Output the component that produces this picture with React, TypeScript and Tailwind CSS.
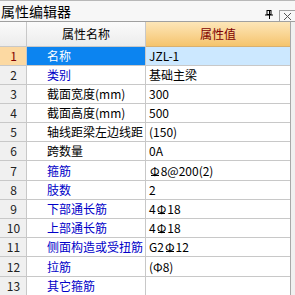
import React from 'react'

type Part = string | { bar: string }

interface Row {
    no: number
    name: string
    blue: boolean
    value: Part[]
}

// 三级钢符号：Φ 下加一横
function Steel() {
    return (
        <span className="relative inline-block leading-none mx-[1px]">
            Φ
            <span className="absolute left-[1px] right-[1px] bottom-[1px] h-px bg-black" />
        </span>
    )
}

const rows: Row[] = [
    { no: 1, name: '名称', blue: true, value: ['JZL-1'] },
    { no: 2, name: '类别', blue: true, value: ['基础主梁'] },
    { no: 3, name: '截面宽度(mm)', blue: false, value: ['300'] },
    { no: 4, name: '截面高度(mm)', blue: false, value: ['500'] },
    { no: 5, name: '轴线距梁左边线距', blue: false, value: ['(150)'] },
    { no: 6, name: '跨数量', blue: false, value: ['0A'] },
    { no: 7, name: '箍筋', blue: true, value: [{ bar: '' }, '8@200(2)'] },
    { no: 8, name: '肢数', blue: true, value: ['2'] },
    { no: 9, name: '下部通长筋', blue: true, value: ['4', { bar: '' }, '18'] },
    { no: 10, name: '上部通长筋', blue: true, value: ['4', { bar: '' }, '18'] },
    { no: 11, name: '侧面构造或受扭筋', blue: true, value: ['G2', { bar: '' }, '12'] },
    { no: 12, name: '拉筋', blue: true, value: ['(Φ8)'] },
    { no: 13, name: '其它箍筋', blue: true, value: [] },
]

export default function App() {
    return (
        <div
            className="w-[295px] h-[295px] overflow-hidden bg-[#f0f0f0] text-[12px] text-black"
            style={{ fontFamily: '"Noto Sans CJK SC", "Liberation Sans", sans-serif' }}
        >
            {/* 标题栏 */}
            <div className="h-[22px] border-t border-[#b8b8b8] border-b border-b-[#a0a0a0] bg-[#f7f7f7] flex items-end">
                <span className="text-[14px] leading-[19px] pl-[1px]">属性编辑器</span>
                <div className="ml-auto flex items-end">
                    <svg width="9" height="9" viewBox="0 0 9 9" className="mb-[2px] mr-[5px]">
                        <rect x="2" y="0.5" width="4" height="4" fill="none" stroke="#000" />
                        <rect x="4" y="0.5" width="1" height="4" fill="#000" />
                        <line x1="0" y1="5" x2="8" y2="5" stroke="#000" />
                        <line x1="4.5" y1="5" x2="4.5" y2="9" stroke="#000" />
                    </svg>
                    <div className="w-[16px] h-[11px] border-l border-t border-[#a0a0a0] flex items-center justify-center">
                        <svg width="9" height="9" viewBox="0 0 9 9">
                            <path d="M1 1 L8 8 M8 1 L1 8" stroke="#555" strokeWidth="1" />
                        </svg>
                    </div>
                </div>
            </div>

            {/* 表格 */}
            <div className="flex">
                <div className="w-[291px] bg-white border-r border-[#a8a8a8]">
                    <div className="grid grid-cols-[27px_119px_144px] h-[25px]">
                        <div className="bg-gradient-to-b from-[#fbfbfb] to-[#ececec] border-r border-b border-[#c8c8c8]" />
                        <div className="bg-gradient-to-b from-[#fbfbfb] to-[#ececec] border-r border-b border-[#c8c8c8] flex items-center justify-center">
                            属性名称
                        </div>
                        <div className="bg-gradient-to-b from-[#fde6b8] to-[#f5c46c] border-b border-[#d8b070] flex items-center justify-center text-[#800000]">
                            属性值
                        </div>
                    </div>

                    {rows.map((r) => {
                        const sel = r.no === 1
                        const tall = r.no === 7 || r.no === 12
                        return (
                            <div
                                key={r.no}
                                className={`grid grid-cols-[27px_119px_144px] ${tall ? 'h-[20px] leading-[19px]' : 'h-[19px] leading-[18px]'}`}
                            >
                                <div
                                    className={`border-r border-b border-[#c8c8c8] text-center pl-[1px] ${sel ? 'bg-[#fcd9a2] text-[#800000]' : 'bg-[#f0f0f0] text-[#222]'
                                        }`}
                                >
                                    {r.no}
                                </div>
                                <div
                                    className={`border-r border-b border-[#c8c8c8] pl-[20px] whitespace-nowrap overflow-hidden ${sel ? 'bg-[#0c84f0] text-white' : r.blue ? 'text-[#0000c8]' : 'text-black'
                                        }`}
                                >
                                    {r.name}
                                </div>
                                <div
                                    className={`border-b border-[#c8c8c8] pl-[3px] whitespace-nowrap overflow-hidden ${sel ? 'bg-[#cce8ff]' : ''
                                        }`}
                                >
                                    {r.value.map((p, i) =>
                                        typeof p === 'string' ? <span key={i}>{p}</span> : <Steel key={i} />
                                    )}
                                </div>
                            </div>
                        )
                    })}
                </div>
                <div className="w-[3px] bg-[#f0f0f0]" />
            </div>
        </div>
    )
}
